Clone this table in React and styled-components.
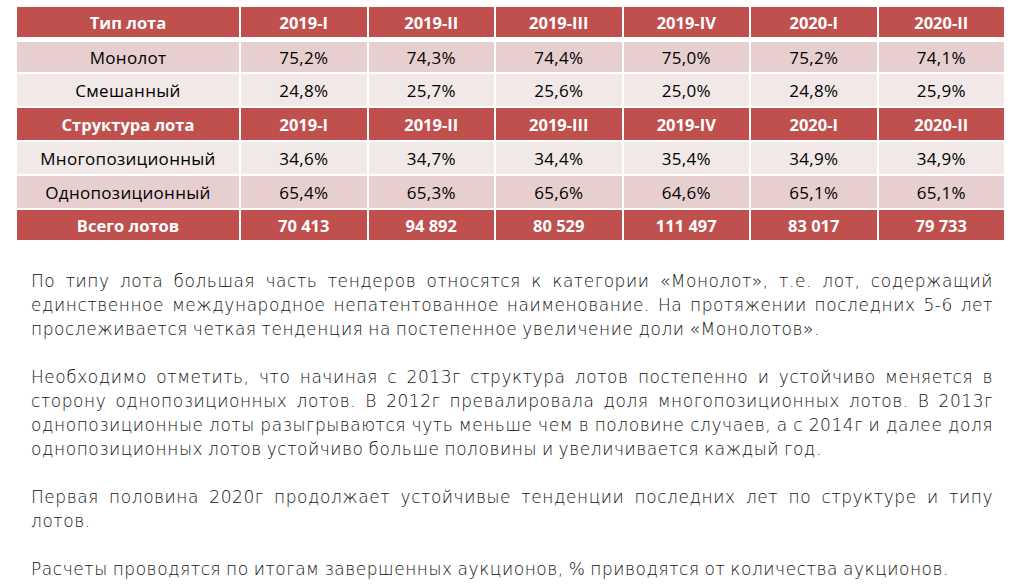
import styled, { createGlobalStyle } from 'styled-components'

const GlobalStyle = createGlobalStyle`
	html, body {
		margin: 0;
		padding: 0;
		background: #ffffff;
	}
`

const sections = [
	{
		title: 'Тип лота',
		rows: [
			{ name: 'Монолот', tone: 'dark', values: ['75,2%', '74,3%', '74,4%', '75,0%', '75,2%', '74,1%'] },
			{ name: 'Смешанный', tone: 'light', values: ['24,8%', '25,7%', '25,6%', '25,0%', '24,8%', '25,9%'] },
		],
	},
	{
		title: 'Структура лота',
		rows: [
			{ name: 'Многопозиционный', tone: 'light', values: ['34,6%', '34,7%', '34,4%', '35,4%', '34,9%', '34,9%'] },
			{ name: 'Однопозиционный', tone: 'dark', values: ['65,4%', '65,3%', '65,6%', '64,6%', '65,1%', '65,1%'] },
		],
	},
]

const periods = ['2019-I', '2019-II', '2019-III', '2019-IV', '2020-I', '2020-II']
const totals = ['70 413', '94 892', '80 529', '111 497', '83 017', '79 733']

const paragraphs = [
	'По типу лота большая часть тендеров относятся к категории «Монолот», т.е. лот, содержащий единственное международное непатентованное наименование. На протяжении последних 5-6 лет прослеживается четкая тенденция на постепенное увеличение доли «Монолотов».',
	'Необходимо отметить, что начиная с 2013г структура лотов постепенно и устойчиво меняется в сторону однопозиционных лотов. В 2012г превалировала доля многопозиционных лотов. В 2013г однопозиционные лоты разыгрываются чуть меньше чем в половине случаев, а с 2014г и далее доля однопозиционных лотов устойчиво больше половины и увеличивается каждый год.',
	'Первая половина 2020г продолжает устойчивые тенденции последних лет по структуре и типу лотов.',
	'Расчеты проводятся по итогам завершенных аукционов, % приводятся от количества аукционов.',
]

const App = () => {
	return (
		<Page>
			<GlobalStyle />
			<Table>
				{sections.map((section, i) => (
					<Section key={section.title}>
						<Row $height={i === 0 ? 30 : 32} $gap={i === 0 ? 5 : 2}>
							<HeadCell>{section.title}</HeadCell>
							{periods.map((p) => (
								<HeadCell key={p}>{p}</HeadCell>
							))}
						</Row>
						{section.rows.map((row, j) => (
							<Row key={row.name} $height={i === 0 && j === 0 ? 30 : 32} $gap={2}>
								<Cell $tone={row.tone}>{row.name}</Cell>
								{row.values.map((v, k) => (
									<Cell key={k} $tone={row.tone}>
										{v}
									</Cell>
								))}
							</Row>
						))}
					</Section>
				))}
				<Row $height={30} $gap={0}>
					<HeadCell>Всего лотов</HeadCell>
					{totals.map((t) => (
						<HeadCell key={t}>{t}</HeadCell>
					))}
				</Row>
			</Table>
			<Text>
				{paragraphs.map((p) => (
					<Paragraph key={p}>{p}</Paragraph>
				))}
			</Text>
		</Page>
	)
}

const Page = styled.div`
	width: 1020px;
	height: 587px;
	overflow: hidden;
	padding-top: 7px;
	box-sizing: border-box;
`

const Table = styled.div`
	margin: 0 16px 0 17px;
	display: flex;
	flex-direction: column;
`

const Section = styled.div`
	display: contents;
`

const Row = styled.div`
	display: grid;
	grid-template-columns: 222px repeat(6, 1fr);
	column-gap: 2px;
	height: ${(p) => p.$height}px;
	margin-bottom: ${(p) => p.$gap}px;
`

const HeadCell = styled.div`
	background: #c0504d;
	color: #ffffff;
	font-family: 'Open Sans', 'Noto Sans', sans-serif;
	font-weight: 700;
	font-size: 16.5px;
	display: flex;
	align-items: center;
	justify-content: center;
`

const Cell = styled.div`
	background: ${(p) => (p.$tone === 'dark' ? '#e8cfcf' : '#f3e8e8')};
	color: #000000;
	font-family: 'Open Sans', 'Noto Sans', sans-serif;
	font-size: 17px;
	letter-spacing: 0.3px;
	display: flex;
	align-items: center;
	justify-content: center;
`

const Text = styled.div`
	margin: 29px 27px 0 31px;
	display: flex;
	flex-direction: column;
	gap: 24px;
`

const Paragraph = styled.p`
	margin: 0;
	font-family: 'DejaVu Sans', sans-serif;
	font-weight: 200;
	font-size: 17px;
	letter-spacing: 0.55px;
	word-spacing: -1px;
	line-height: 24px;
	color: #111111;
	text-align: justify;
`

export default App
